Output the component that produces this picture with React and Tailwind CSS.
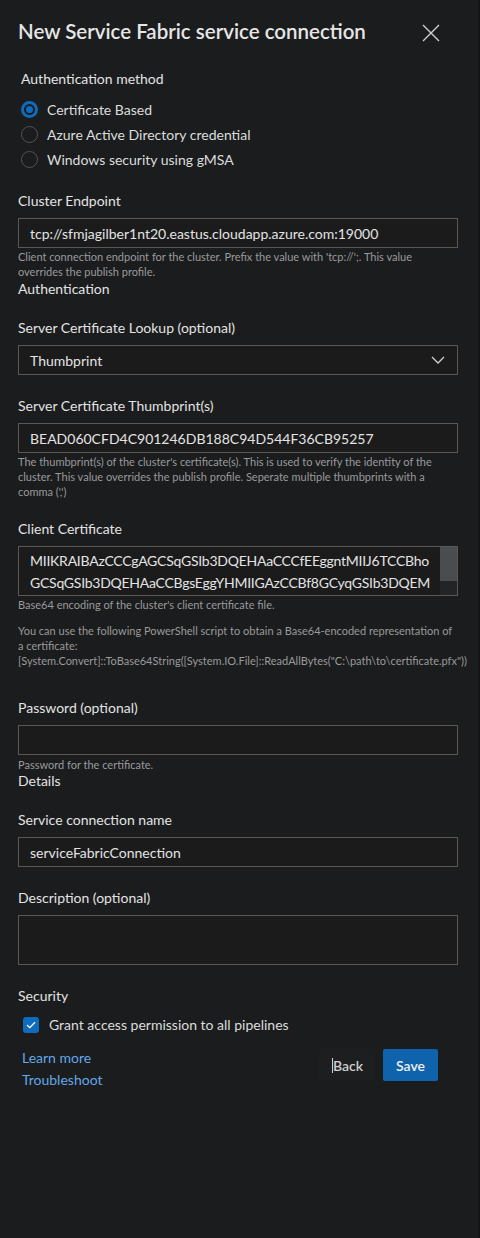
import React from 'react'

const font = { fontFamily: '"Segoe UI", Lato, "Open Sans", sans-serif' }

function Label({ children, className = '' }) {
  return <div className={`text-[14px] leading-[20px] text-[#e3e3e3] ${className}`}>{children}</div>
}

function Help({ children, className = '' }) {
  return <div className={`text-[11px] leading-[15px] text-[#9a9a9a] ${className}`}>{children}</div>
}

function TextBox({ value, className = '' }) {
  return (
    <div className={`h-[30px] border border-[#5b5853] bg-[#1b1b1c] flex items-center px-[11px] text-[14px] text-[#e3e3e3] ${className}`}>
      {value}
    </div>
  )
}

function Radio({ checked, label }) {
  return (
    <div className="flex items-center h-[25px]">
      {checked ? (
        <span className="w-[17px] h-[17px] rounded-full bg-[#0f6cbd] flex items-center justify-center ml-[21px]">
          <span className="w-[11px] h-[11px] rounded-full bg-[#0f6cbd] border-2 border-[#1b1c1e]" />
        </span>
      ) : (
        <span className="w-[17px] h-[17px] rounded-full border border-[#57534d] ml-[21px]" />
      )}
      <span className="ml-[9px] text-[14px] text-[#dcdcdc]">{label}</span>
    </div>
  )
}

export default function App() {
  return (
    <div className="w-[480px] min-h-[1238px] bg-[#1b1c1e] border-r-2 border-[#141516]" style={font}>
      <div className="flex items-center justify-between pl-[18px] pr-[38px] pt-[18px]">
        <h1 className="text-[20.5px] leading-[26px] font-semibold text-[#e6e6e6]">New Service Fabric service connection</h1>
        <svg width="18" height="18" viewBox="0 0 18 18" className="mt-[4px]">
          <path d="M1 1 L17 17 M17 1 L1 17" stroke="#cfcfcf" strokeWidth="1.4" />
        </svg>
      </div>

      <div className="pl-[18px] pr-[20px]">
        <Label className="mt-[25px] pl-[3px]">Authentication method</Label>
        <div className="mt-[8px] -ml-[18px]">
          <Radio checked label="Certificate Based" />
          <Radio label="Azure Active Directory credential" />
          <Radio label="Windows security using gMSA" />
        </div>

        <Label className="mt-[19px]">Cluster Endpoint</Label>
        <TextBox className="mt-[7px]" value="tcp://sfmjagilber1nt20.eastus.cloudapp.azure.com:19000" />
        <Help className="mt-[1px]">Client connection endpoint for the cluster. Prefix the value with 'tcp://';. This value overrides the publish profile.</Help>
        <Label className="mt-[0px]">Authentication</Label>

        <Label className="mt-[19px]">Server Certificate Lookup (optional)</Label>
        <div className="mt-[7px] h-[30px] border border-[#5b5853] bg-[#1b1b1c] flex items-center justify-between px-[11px] text-[14px] text-[#e3e3e3]">
          <span>Thumbprint</span>
          <svg width="14" height="8" viewBox="0 0 14 8" className="mr-[1px]">
            <path d="M1 1 L7 7 L13 1" fill="none" stroke="#d0d0d0" strokeWidth="1.3" />
          </svg>
        </div>

        <Label className="mt-[21px]">Server Certificate Thumbprint(s)</Label>
        <TextBox className="mt-[7px]" value="BEAD060CFD4C901246DB188C94D544F36CB95257" />
        <Help className="mt-[1px]">The thumbprint(s) of the cluster's certificate(s). This is used to verify the identity of the cluster. This value overrides the publish profile. Seperate multiple thumbprints with a comma (',')</Help>

        <Label className="mt-[20px]">Client Certificate</Label>
        <div className="mt-[7px] h-[50px] border border-[#5b5853] bg-[#1b1b1c] flex">
          <div className="flex-1 pl-[11px] pt-[3px] text-[14px] leading-[22px] tracking-[-0.25px] text-[#e3e3e3] overflow-hidden whitespace-nowrap">
            <div>MIIKRAIBAzCCCgAGCSqGSIb3DQEHAaCCCfEEggntMIIJ6TCCBho</div>
            <div>GCSqGSIb3DQEHAaCCBgsEggYHMIIGAzCCBf8GCyqGSIb3DQEM</div>
          </div>
          <div className="w-[17px] bg-[#222425] flex flex-col">
            <div className="h-[34px] bg-[#4a4d4f]" />
          </div>
        </div>
        <Help className="mt-[1px]">Base64 encoding of the cluster's client certificate file.</Help>
        <Help className="mt-[11px] whitespace-pre-line">
          {'You can use the following PowerShell script to obtain a Base64-encoded representation of\na certificate:\n[System.Convert]::ToBase64String([System.IO.File]::ReadAllBytes("C:\\path\\to\\certificate.pfx"))'}
        </Help>

        <Label className="mt-[30px]">Password (optional)</Label>
        <TextBox className="mt-[7px]" value="" />
        <Help className="mt-[2px]">Password for the certificate.</Help>
        <Label className="mt-[-1px]">Details</Label>

        <Label className="mt-[19px]">Service connection name</Label>
        <TextBox className="mt-[7px]" value="serviceFabricConnection" />

        <Label className="mt-[21px]">Description (optional)</Label>
        <div className="mt-[7px] h-[50px] border border-[#5b5853] bg-[#1b1b1c]" />

        <Label className="mt-[21px]">Security</Label>
        <div className="mt-[8px] flex items-center pl-[5px]">
          <span className="w-[16px] h-[16px] rounded-[3px] bg-[#0f6cbd] flex items-center justify-center">
            <svg width="10" height="8" viewBox="0 0 10 8">
              <path d="M1 4 L3.8 6.7 L9 1.2" fill="none" stroke="#ffffff" strokeWidth="1.3" />
            </svg>
          </span>
          <span className="ml-[10px] text-[14px] text-[#dcdcdc]">Grant access permission to all pipelines</span>
        </div>

        <div className="mt-[12px] flex items-start justify-between pl-[4px] pr-[20px]">
          <div className="flex flex-col text-[14px] leading-[22px] text-[#62a8e8]">
            <span>Learn more</span>
            <span>Troubleshoot</span>
          </div>
          <div className="flex items-center gap-[8px] mt-[2px]">
            <div className="h-[32px] w-[56px] bg-[#1d1e20] flex items-center pl-[13px] text-[14px] font-semibold text-[#cfcfcf]">
              <span className="border-l border-[#d0d0d0] leading-[15px]">Back</span>
            </div>
            <div className="h-[32px] w-[55px] rounded-[2px] bg-[#0f62ac] flex items-center justify-center text-[14px] font-semibold text-[#f0f0f0]">Save</div>
          </div>
        </div>
      </div>
    </div>
  )
}
